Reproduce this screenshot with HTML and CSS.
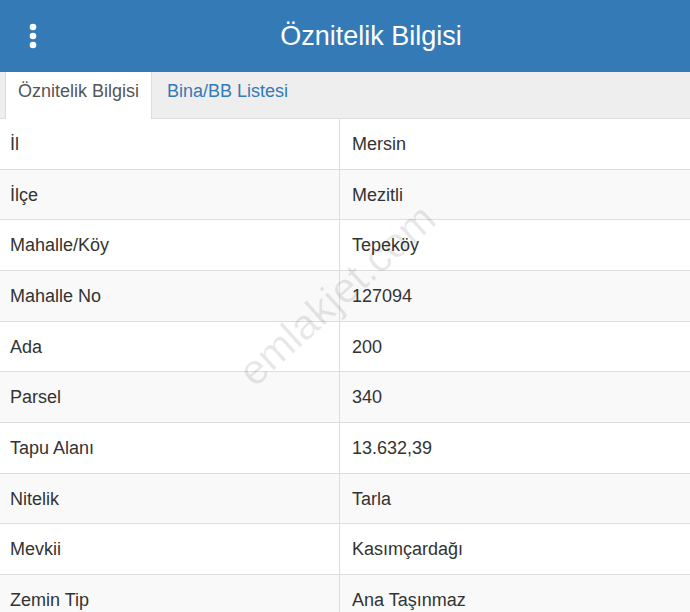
FILE: index.html
```html
<!DOCTYPE html>
<html lang="tr">
<head>
  <meta charset="UTF-8">
  <meta name="viewport" content="width=device-width, initial-scale=1.0">
  <title>Öznitelik Bilgisi</title>
  <link rel="stylesheet" href="styles.css">
</head>
<body>
  <div class="header">
    <div class="menu-btn">
      <svg width="8" height="26" viewBox="0 0 8 26">
        <circle cx="4" cy="4" r="3.3" fill="#fff"/>
        <circle cx="4" cy="13" r="3.3" fill="#fff"/>
        <circle cx="4" cy="22" r="3.3" fill="#fff"/>
      </svg>
    </div>
    <h1 class="title">Öznitelik Bilgisi</h1>
  </div>

  <ul class="tabs">
    <li class="tab active">Öznitelik Bilgisi</li>
    <li class="tab">Bina/BB Listesi</li>
  </ul>

  <div class="content">
    <table class="info">
      <tr><td>İl</td><td>Mersin</td></tr>
      <tr><td>İlçe</td><td>Mezitli</td></tr>
      <tr><td>Mahalle/Köy</td><td>Tepeköy</td></tr>
      <tr><td>Mahalle No</td><td>127094</td></tr>
      <tr><td>Ada</td><td>200</td></tr>
      <tr><td>Parsel</td><td>340</td></tr>
      <tr><td>Tapu Alanı</td><td>13.632,39</td></tr>
      <tr><td>Nitelik</td><td>Tarla</td></tr>
      <tr><td>Mevkii</td><td>Kasımçardağı</td></tr>
      <tr><td>Zemin Tip</td><td>Ana Taşınmaz</td></tr>
    </table>
    <div class="watermark">emlakjet.com</div>
  </div>
</body>
</html>
```

FILE: styles.css
```css
body {
  margin: 0;
  font-family: "Liberation Sans", Arial, sans-serif;
  color: #333;
  background-color: white;
  overflow: hidden;
}
.header {
  display: flex;
  align-items: center;
  height: 72px;
  background-color: #337ab7;
}
.menu-btn {
  width: 52px;
  flex-shrink: 0;
  padding-left: 29px;
  box-sizing: border-box;
  display: flex;
  align-items: center;
}
.menu-btn svg {
  display: block;
}
.title {
  flex: 1;
  margin: 0;
  text-align: center;
  color: white;
  font-size: 27px;
  font-weight: normal;
  line-height: 67px;
}
.tabs {
  display: flex;
  margin: 0;
  padding: 0 0 0 5px;
  list-style: none;
  height: 46px;
  background-color: #eee;
  border-bottom: 1px solid #ddd;
}
.tab {
  padding: 8px 12px 0;
  margin-right: 2px;
  font-size: 18px;
  line-height: 22px;
  color: #337ab7;
  border: 1px solid transparent;
  border-top: none;
  border-bottom: none;
}
.tab.active {
  background-color: white;
  color: #555;
  border-color: #ddd;
  height: 39px;
}
.content {
  position: relative;
}
.info {
  width: 100%;
  border-collapse: collapse;
  font-size: 18px;
}
.info td {
  padding: 15px 10px 13px;
  line-height: 21.67px;
  border-bottom: 1px solid #ddd;
  text-align: left;
}
.info td:first-child {
  width: 319px;
  border-right: 1px solid #ddd;
}
.info td:last-child {
  padding-left: 12px;
}
.info tr:nth-child(even) {
  background-color: #f9f9f9;
}
.watermark {
  position: absolute;
  left: 192px;
  top: 152px;
  width: 290px;
  text-align: center;
  font-size: 42px;
  color: rgba(0, 0, 0, 0.09);
  transform: rotate(-42deg);
  pointer-events: none;
}
```
